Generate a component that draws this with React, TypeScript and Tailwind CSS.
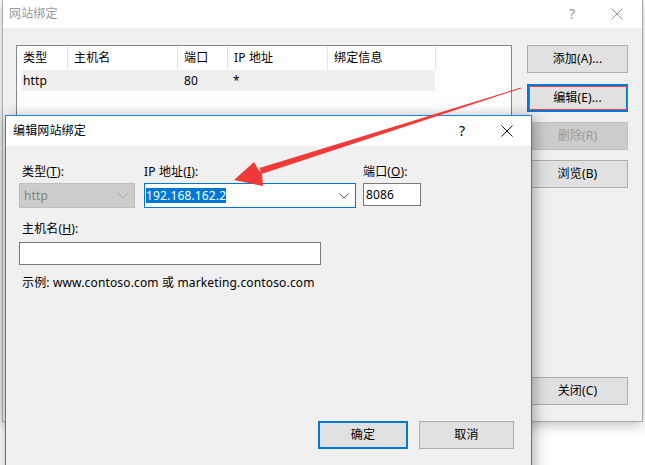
import React from "react";

const XIcon = ({ color }: { color: string }) => (
  <svg width="12" height="12" viewBox="0 0 12 12">
    <path d="M0.5 0.5L11.5 11.5M11.5 0.5L0.5 11.5" stroke={color} strokeWidth="1" fill="none" />
  </svg>
);

const Chevron = ({ color }: { color: string }) => (
  <svg width="10" height="6" viewBox="0 0 10 6">
    <path d="M0.5 0.5L5 5L9.5 0.5" stroke={color} strokeWidth="1" fill="none" />
  </svg>
);

const Btn = ({ children, disabled }: { children: React.ReactNode; disabled?: boolean }) => (
  <div
    className={
      disabled
        ? "w-[101px] h-[28px] flex items-center justify-center bg-[#cccccc] border border-[#bfbfbf] text-[#9a9a9a]"
        : "w-[101px] h-[28px] flex items-center justify-center bg-[#e1e1e1] border border-[#adadad] text-black"
    }
  >
    {children}
  </div>
);

export default function App() {
  return (
    <div className="relative w-[645px] h-[465px] overflow-hidden bg-white text-[12px] leading-[16px] tracking-[0.15px] font-['Noto_Sans','Noto_Sans_CJK_SC',sans-serif]">
      {/* Outer window */}
      <div className="absolute left-[2px] top-0 w-[641px] h-[422px] flex flex-col border-x border-b border-[#aaaaaa] shadow-[0_3px_12px_rgba(0,0,0,0.25)]">
        <div className="h-[28px] bg-white flex items-center shrink-0">
          <div className="pl-[6px] text-[#999999] flex-1">网站绑定</div>
          <div className="w-[40px] flex justify-center text-[#999999] text-[14px]">?</div>
          <div className="w-[50px] flex justify-center">
            <XIcon color="#999999" />
          </div>
        </div>
        <div className="flex-1 bg-[#f0f0f0] flex pl-[13px] pt-[17px]">
          <div className="w-[496px] h-[340px] bg-white border border-[#828790]">
            <div className="flex h-[24px] items-center">
              <div className="w-[51px] h-full border-r border-[#e5e5e5] pl-[6px] flex items-center">类型</div>
              <div className="w-[110px] h-full border-r border-[#e5e5e5] pl-[6px] flex items-center">主机名</div>
              <div className="w-[50px] h-full border-r border-[#e5e5e5] pl-[6px] flex items-center">端口</div>
              <div className="w-[100px] h-full border-r border-[#e5e5e5] pl-[6px] flex items-center">IP 地址</div>
              <div className="w-[108px] h-full border-r border-[#e5e5e5] pl-[6px] flex items-center">绑定信息</div>
            </div>
            <div className="ml-[4px] w-[414px] h-[21px] bg-[#efefef] flex items-center">
              <div className="w-[163px] pl-[2px]">http</div>
              <div className="w-[49px]">80</div>
              <div>*</div>
            </div>
          </div>
          <div className="ml-[15px] flex flex-col pb-[16px]">
            <Btn>添加(A)...</Btn>
            <div className="relative mt-[11px] w-[101px] h-[28px] flex items-center justify-center bg-[#e1e1e1] border-2 border-[#0078d7]">
              编辑(E)...
              <div className="absolute left-[0px] top-[0px] right-[-2px] bottom-[0px] border border-[#ff3b3b]" />
            </div>
            <div className="mt-[10px]">
              <Btn disabled>删除(R)</Btn>
            </div>
            <div className="mt-[10px]">
              <Btn>浏览(B)</Btn>
            </div>
            <div className="mt-auto">
              <Btn>关闭(C)</Btn>
            </div>
          </div>
        </div>
      </div>

      {/* Dialog */}
      <div className="absolute left-[5px] top-[115px] w-[527px] h-[370px] flex flex-col border border-[#1f86d9] shadow-[2px_2px_14px_rgba(0,0,0,0.35)]">
        <div className="h-[30px] bg-white flex items-center shrink-0">
          <div className="pl-[7px] flex-1 text-black">编辑网站绑定</div>
          <div className="w-[42px] flex justify-center text-[14px]">?</div>
          <div className="w-[48px] flex justify-center">
            <XIcon color="#111111" />
          </div>
        </div>
        <div className="flex-1 bg-[#f0f0f0] pl-[13px] pt-[18px] flex flex-col">
          <div className="flex">
            <div className="w-[116px] flex flex-col">
              <div className="pl-[3px]">
                类型(<span className="underline">T</span>):
              </div>
              <div className="mt-[3px] h-[25px] bg-[#cccccc] border border-[#bfbfbf] flex items-center justify-between pl-[4px] pr-[6px] text-[#838383]">
                <span>http</span>
                <Chevron color="#a0a0a0" />
              </div>
            </div>
            <div className="ml-[9px] w-[212px] flex flex-col">
              <div>
                IP 地址(<span className="underline">I</span>):
              </div>
              <div className="mt-[3px] h-[25px] bg-white border border-[#0078d7] flex items-center justify-between pl-[1px] pr-[6px]">
                <span className="bg-[#0078d7] text-white leading-[15px]">192.168.162.2</span>
                <Chevron color="#555555" />
              </div>
            </div>
            <div className="ml-[7px] w-[58px] flex flex-col">
              <div>
                端口(<span className="underline">O</span>):
              </div>
              <div className="mt-[3px] h-[23px] bg-white border border-[#7a7a7a] flex items-center pl-[2px]">8086</div>
            </div>
          </div>
          <div className="mt-[13px] pl-[3px]">
            主机名(<span className="underline">H</span>):
          </div>
          <div className="mt-[5px] w-[302px] h-[23px] bg-white border border-[#7a7a7a]" />
          <div className="mt-[10px] pl-[3px]">示例: www.contoso.com 或 marketing.contoso.com</div>
          <div className="mt-[130px] flex justify-end pr-[17px] gap-[11px]">
            <div className="w-[90px] h-[28px] flex items-center justify-center bg-[#e1e1e1] border-2 border-[#0078d7]">确定</div>
            <div className="w-[95px] h-[28px] flex items-center justify-center bg-[#e1e1e1] border border-[#adadad]">取消</div>
          </div>
        </div>
      </div>

      {/* Red annotation arrow */}
      <svg className="absolute left-0 top-0 pointer-events-none" width="645" height="465" viewBox="0 0 645 465">
        <polygon points="521,87.5 521.3,88.4 261.5,174 259.5,168" fill="#f03a3a" />
        <polygon points="234,180 254,162 258,169 262,174 263,186" fill="#f03a3a" />
      </svg>
    </div>
  );
}
